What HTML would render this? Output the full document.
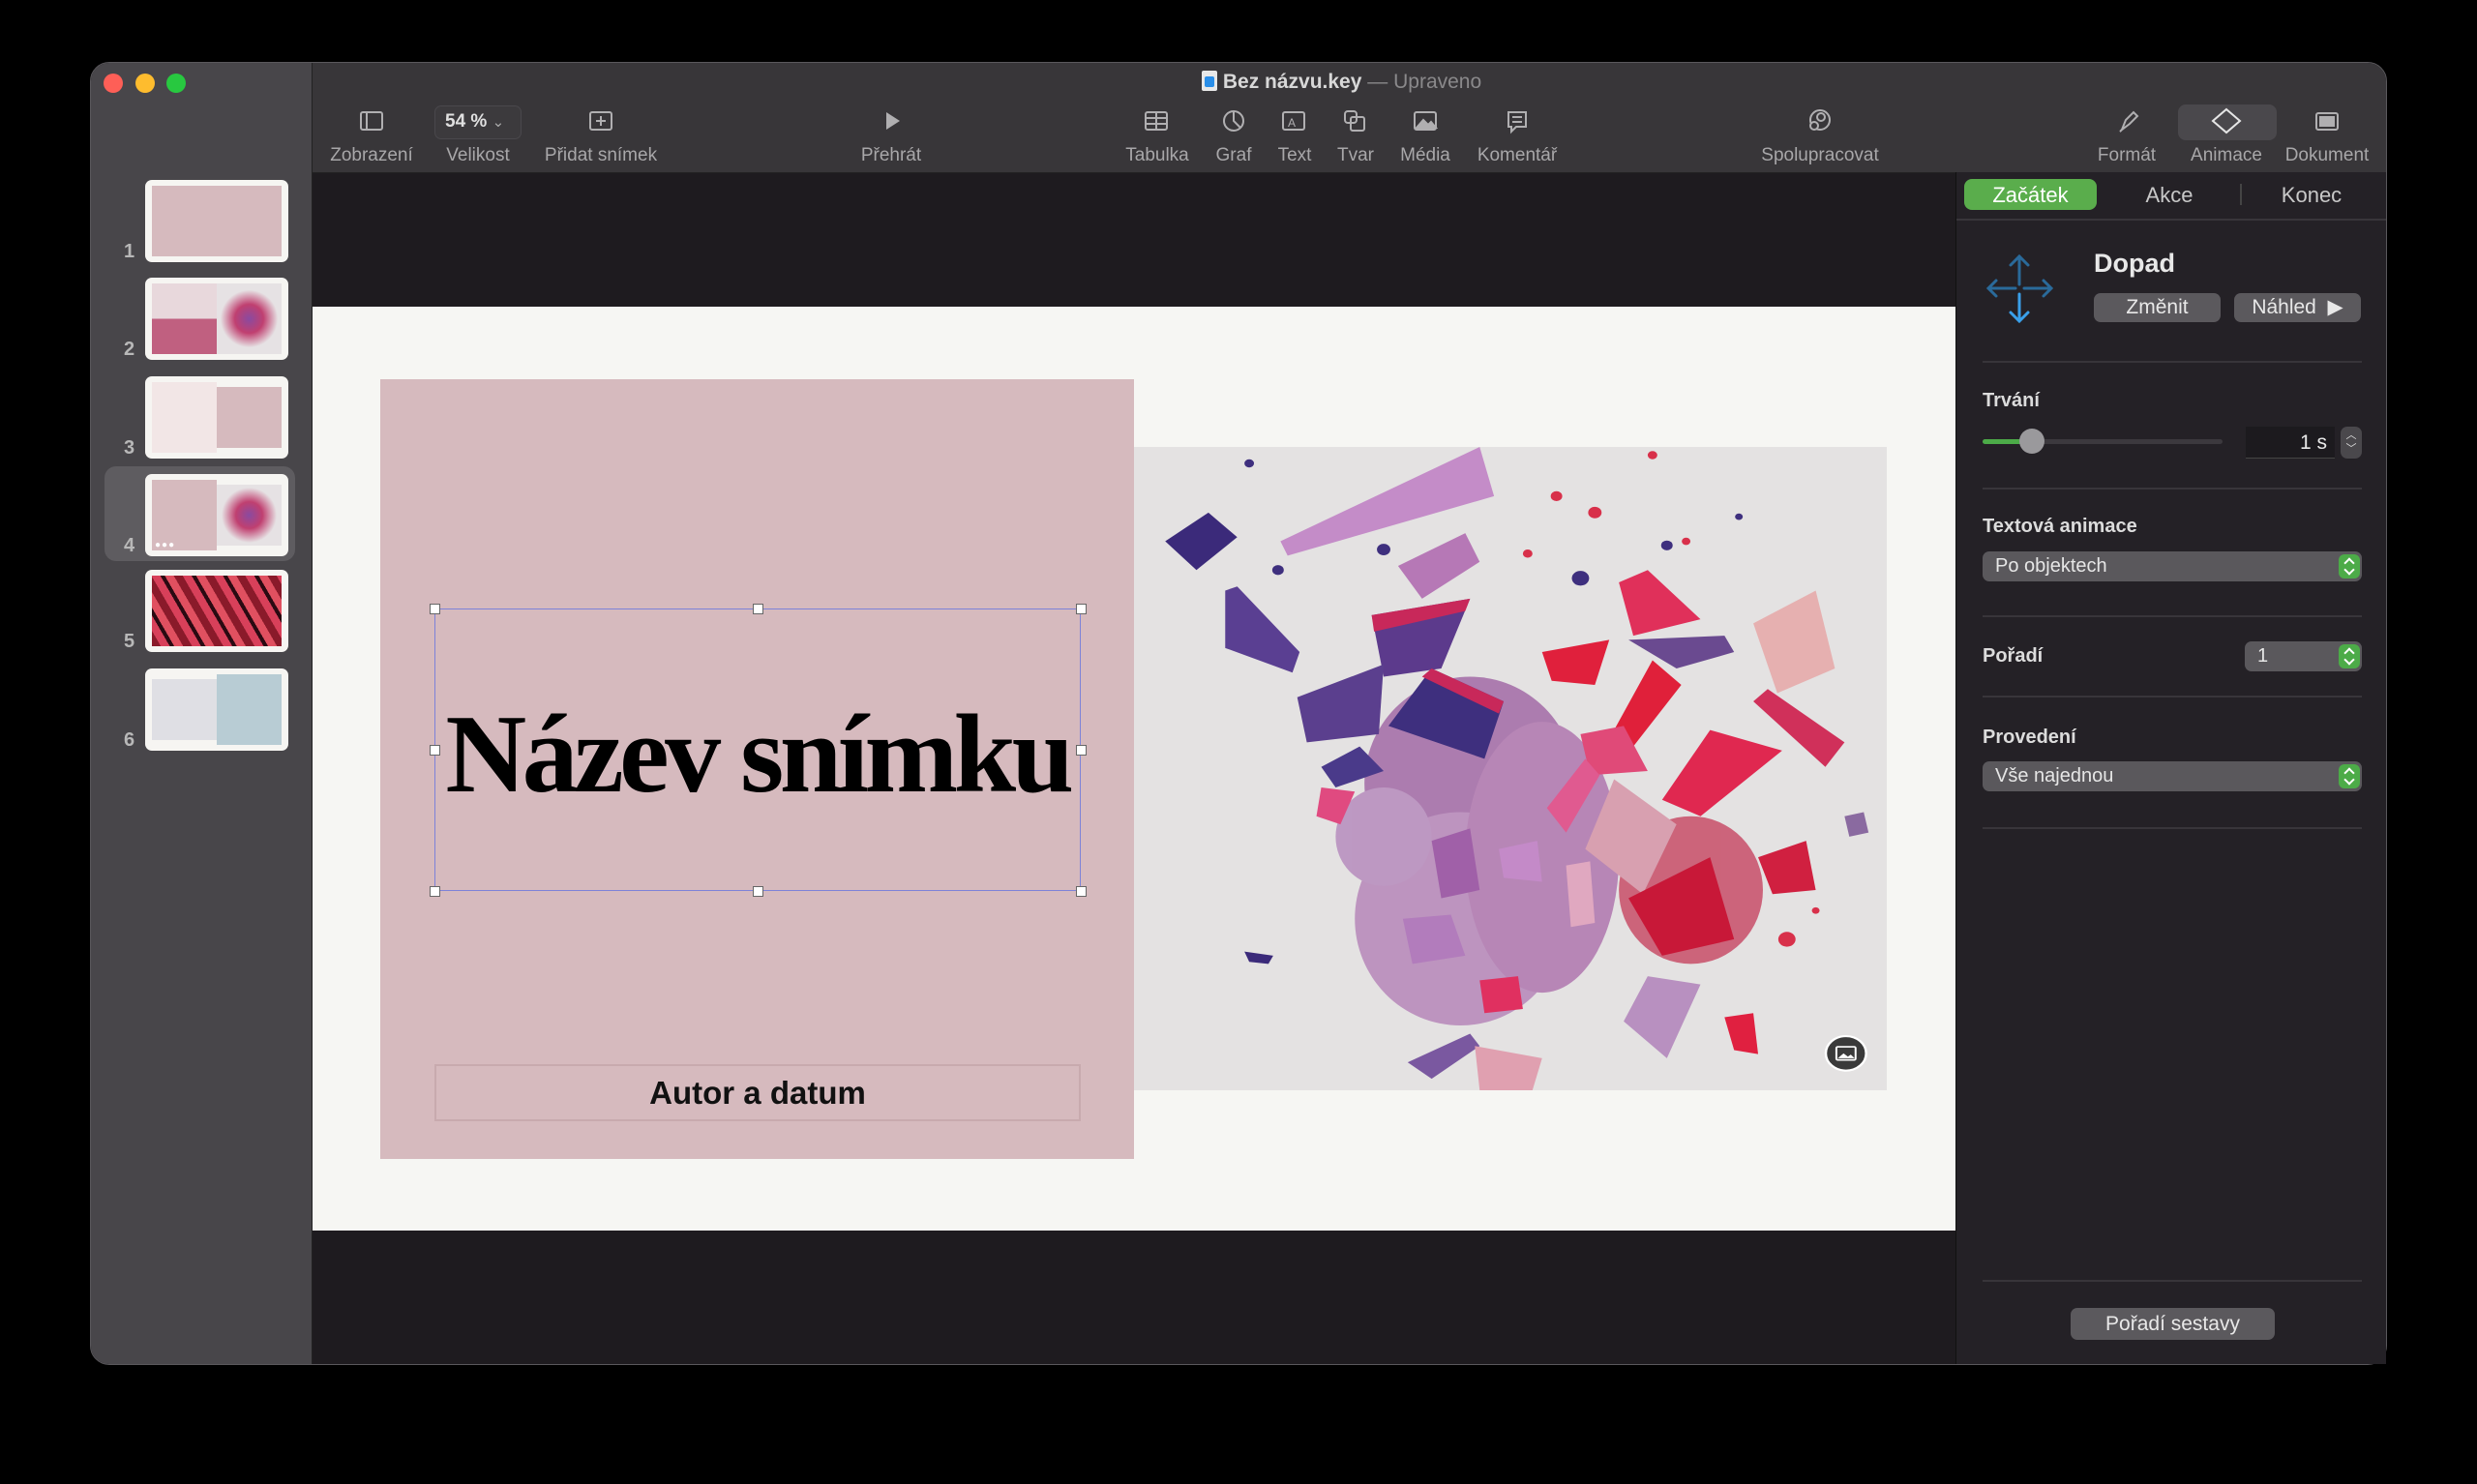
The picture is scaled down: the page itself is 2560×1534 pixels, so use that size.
<!DOCTYPE html>
<html><head><meta charset="utf-8"><style>
*{margin:0;padding:0;box-sizing:border-box}
body{width:2560px;height:1534px;background:#000;position:relative;overflow:hidden;font-family:"Liberation Sans",sans-serif}
.abs{position:absolute}
.win{left:93px;top:64px;width:2374px;height:1347px;border-radius:20px;overflow:hidden;background:#1e1b1f;border:1px solid #5a585c}
.tl{width:20px;height:20px;border-radius:50%;top:11px}
.lbl{color:#a8a7a9;font-size:19px;top:86px;transform:translateX(-50%);white-space:nowrap}
.sep{height:2px;background:#38353a;left:2049px;width:392px}
.plab{color:#dcdcdc;font-size:20px;font-weight:bold;left:2049px}
.pop{background:#5a585c;border-radius:7px;height:31px;color:#e6e6e6;font-size:20px;line-height:31px;padding-left:13px}
.gstep{position:absolute;right:2px;top:3px;width:22px;height:25px;border-radius:6px;background:#4cab48}
.gstep:before{content:"";position:absolute;left:7px;top:5px;width:6px;height:6px;border-left:2px solid #fff;border-top:2px solid #fff;transform:rotate(45deg)}
.gstep:after{content:"";position:absolute;left:7px;top:12px;width:6px;height:6px;border-right:2px solid #fff;border-bottom:2px solid #fff;transform:rotate(45deg)}
.btn{background:#5b595d;border-radius:7px;color:#e8e8e8;font-size:21px;text-align:center;height:30px;line-height:30px}
.th{left:150px;width:148px;height:85px;background:#f6f5f2;border-radius:7px;padding:6px 7px}
.num{left:128px;color:#b8b8b8;font-size:20px;font-weight:bold}
.hd{width:11px;height:11px;background:#fff;border:1px solid #666;position:absolute}
</style></head><body>
<div class="abs win">
<div class="abs" style="left:0;top:0;width:229px;height:1347px;background:#48464a;border-right:1px solid #222"></div>
<div class="abs tl" style="left:13px;background:#fe5f57"></div>
<div class="abs tl" style="left:46px;background:#febc2e"></div>
<div class="abs tl" style="left:78px;background:#28c840"></div>
<div class="abs" style="left:229px;top:0;width:2145px;height:114px;background:#383639;border-bottom:1px solid #222"></div>
<div class="abs" style="left:1148px;top:8px;color:#d8d8d8;font-size:21px;white-space:nowrap"><span style="display:inline-block;width:16px;height:21px;background:#e8e8e8;border-radius:2px;vertical-align:-3px;position:relative"><span style="position:absolute;left:3px;top:6px;width:10px;height:11px;background:#2a8ee8;border-radius:2px"></span></span> <b>Bez názvu.key</b> <span style="color:#8a898b">— Upraveno</span></div>
</div>
<div class="abs" style="left:449px;top:109px;width:90px;height:35px;border-radius:7px;border:1px solid #4a484c;background:#3c3a3d"></div>
<div class="abs" style="left:460px;top:115px;color:#e0e0e0;font-size:19px;font-weight:bold">54 % <span style="font-weight:normal;color:#aaa;font-size:15px">⌄</span></div>
<div class="abs" style="left:2251px;top:108px;width:102px;height:37px;border-radius:8px;background:#4a484c"></div>
<svg class="abs" style="left:0;top:0" width="2560" height="180" fill="none" stroke="#b0afb1" stroke-width="2">
<rect x="373" y="116" width="22" height="18" rx="2"/><line x1="379" y1="116" x2="379" y2="134"/>
<rect x="610" y="116" width="22" height="18" rx="2"/><path d="M621 120v10M616 125h10"/>
<path d="M916 116l14 9-14 9z" fill="#b0afb1" stroke="none"/>
<rect x="1184" y="116" width="22" height="18" rx="2"/><path d="M1184 122h22M1184 128h22M1195 116v18"/>
<circle cx="1275" cy="125" r="10"/><path d="M1275 115v10l7 7"/>
<rect x="1326" y="116" width="22" height="18" rx="2"/><text x="1331" y="131" fill="#b0afb1" stroke="none" font-size="12" font-family="Liberation Sans">A</text>
<rect x="1390" y="115" width="12" height="12" rx="3"/><rect x="1396" y="121" width="14" height="14" rx="2"/>
<rect x="1462" y="116" width="22" height="18" rx="2"/><path d="M1464 132l7-8 5 5 3-3 5 6z" fill="#b0afb1"/>
<path d="M1559 116h18v15h-10l-5 5v-5h-3z"/><path d="M1563 121h10M1563 126h10"/>
<circle cx="1881" cy="124" r="10"/><circle cx="1882" cy="121" r="4"/><circle cx="1875" cy="130" r="4" fill="#383639"/>
<path d="M2193 134l4-10 8-8 4 4-8 8zM2191 136l3-3"/>
<path d="M2301 113l14 12-14 12-14-12z" stroke="#e6e6e6"/>
<rect x="2394" y="117" width="22" height="17" rx="2"/><rect x="2398" y="121" width="14" height="9" fill="#b0afb1"/>
</svg>
<div class="abs lbl" style="left:384px;top:150px">Zobrazení</div>
<div class="abs lbl" style="left:494px;top:150px">Velikost</div>
<div class="abs lbl" style="left:621px;top:150px">Přidat snímek</div>
<div class="abs lbl" style="left:921px;top:150px">Přehrát</div>
<div class="abs lbl" style="left:1196px;top:150px">Tabulka</div>
<div class="abs lbl" style="left:1275px;top:150px">Graf</div>
<div class="abs lbl" style="left:1338px;top:150px">Text</div>
<div class="abs lbl" style="left:1401px;top:150px">Tvar</div>
<div class="abs lbl" style="left:1473px;top:150px">Média</div>
<div class="abs lbl" style="left:1568px;top:150px">Komentář</div>
<div class="abs lbl" style="left:1881px;top:150px">Spolupracovat</div>
<div class="abs lbl" style="left:2198px;top:150px">Formát</div>
<div class="abs lbl" style="left:2301px;top:150px">Animace</div>
<div class="abs lbl" style="left:2405px;top:150px">Dokument</div>

<div class="abs" style="left:108px;top:482px;width:197px;height:98px;border-radius:12px;background:#5e5c60"></div>
<div class="abs th" style="top:186px"><div style="width:100%;height:100%;background:#d6babe"></div></div>
<div class="abs num" style="top:249px">1</div>
<div class="abs th" style="top:287px"><div style="display:flex;height:100%"><div style="width:50%;background:linear-gradient(#e8d8dc 0 50%,#c06080 50%)"></div><div style="width:50%;background:radial-gradient(circle at 50% 50%,#8a4aa0 0,#c04070 30%,#e6e2e4 60%)"></div></div></div>
<div class="abs num" style="top:350px">2</div>
<div class="abs th" style="top:389px"><div style="display:flex;height:100%"><div style="width:50%;background:#f2e6e6"></div><div style="width:50%;background:#d6babe;margin:5px 0"></div></div></div>
<div class="abs num" style="top:452px">3</div>
<div class="abs th" style="top:490px"><div style="display:flex;height:100%"><div style="width:50%;background:#d6babe"></div><div style="width:50%;background:radial-gradient(circle at 50% 50%,#8a4aa0 0,#c04070 30%,#e6e2e4 62%);margin:5px 0"></div></div><div class="abs" style="left:10px;top:68px;color:#fff;font-size:10px;letter-spacing:1px">●●●</div></div>
<div class="abs num" style="top:553px">4</div>
<div class="abs th" style="top:589px"><div style="width:100%;height:100%;background:repeating-linear-gradient(60deg,#8a1a2a 0 8px,#d8405a 8px 16px,#2a0a12 16px 20px,#e05060 20px 28px)"></div></div>
<div class="abs num" style="top:652px">5</div>
<div class="abs th" style="top:691px"><div style="display:flex;height:100%"><div style="width:50%;background:#dfdfe4;margin:5px 0"></div><div style="width:50%;background:#b8ccd4"></div></div></div>
<div class="abs num" style="top:754px">6</div>

<div class="abs" style="left:323px;top:317px;width:1698px;height:955px;background:#f6f6f3"></div>
<div class="abs" style="left:393px;top:392px;width:779px;height:806px;background:#d6babe"></div>
<div class="abs" style="left:449px;top:629px;width:668px;height:292px;border:1px solid #7d82d8"></div>
<div class="hd" style="left:444px;top:624px"></div><div class="hd" style="left:778px;top:624px"></div><div class="hd" style="left:1112px;top:624px"></div>
<div class="hd" style="left:444px;top:770px"></div><div class="hd" style="left:1112px;top:770px"></div>
<div class="hd" style="left:444px;top:916px"></div><div class="hd" style="left:778px;top:916px"></div><div class="hd" style="left:1112px;top:916px"></div>
<div class="abs" style="left:449px;top:710px;width:668px;text-align:center;font-family:'Liberation Serif',serif;font-weight:bold;font-size:116px;letter-spacing:-4.5px;color:#000;line-height:140px;white-space:nowrap">Název snímku</div>
<div class="abs" style="left:449px;top:1100px;width:668px;height:59px;border:2px solid #c8aaae;text-align:center;font-size:33px;font-weight:bold;line-height:56px;color:#111">Autor a datum</div>
<svg class="abs" style="left:1172px;top:462px" width="778" height="665" viewBox="0 0 1568 1568" preserveAspectRatio="none">
<rect width="1568" height="1568" fill="#e4e2e2"/>
<g opacity=".75">
<ellipse cx="700" cy="820" rx="220" ry="260" fill="#9a5a9e"/>
<ellipse cx="680" cy="1150" rx="220" ry="260" fill="#b07ab4"/>
<ellipse cx="850" cy="1000" rx="160" ry="330" fill="#a868a8"/>
<ellipse cx="1160" cy="1080" rx="150" ry="180" fill="#c43a58"/>
<ellipse cx="520" cy="950" rx="100" ry="120" fill="#b080b8"/>
</g>
<polygon points="305,230 720,0 750,120 320,265" fill="#c48cc8"/>
<polygon points="65,230 155,160 215,220 130,300" fill="#3b2a7a"/>
<polygon points="190,350 215,340 345,500 330,550 190,490" fill="#5a3f92"/>
<polygon points="550,290 690,210 720,280 600,370" fill="#b678b6"/>
<polygon points="495,410 700,370 640,540 520,560" fill="#5c3a8c"/>
<polygon points="495,410 700,370 690,400 500,450" fill="#c8285a"/>
<polygon points="340,610 520,530 510,700 360,720" fill="#5b3f8e"/>
<polygon points="530,680 620,540 770,620 730,760" fill="#3e2f7e"/>
<polygon points="600,560 620,540 770,620 760,650" fill="#c8285a"/>
<polygon points="390,780 470,730 520,790 420,830" fill="#4a3a8a"/>
<polygon points="850,500 990,470 960,580 870,570" fill="#e0203c"/>
<polygon points="1010,330 1070,300 1180,420 1040,460" fill="#e0305a"/>
<polygon points="1030,470 1230,460 1250,500 1130,540" fill="#6a4a90"/>
<polygon points="1290,430 1420,350 1460,540 1340,600" fill="#e6b0b0"/>
<polygon points="1000,690 1080,520 1140,580 1040,730" fill="#e0203a"/>
<polygon points="930,700 1020,680 1070,790 950,800" fill="#e04a78"/>
<polygon points="1290,620 1320,590 1480,720 1440,780" fill="#d0305a"/>
<polygon points="1100,860 1200,690 1350,740 1180,900" fill="#e02850"/>
<polygon points="860,880 940,760 970,800 900,940" fill="#e05a90"/>
<polygon points="940,980 1000,810 1130,920 1060,1090" fill="#d8a0b0"/>
<polygon points="1030,1100 1200,1000 1250,1200 1100,1240" fill="#c81838"/>
<polygon points="1300,1000 1400,960 1420,1080 1330,1090" fill="#d02040"/>
<polygon points="1020,1400 1070,1290 1180,1310 1110,1490" fill="#b890c0"/>
<polygon points="570,1500 700,1430 720,1460 620,1540" fill="#7a58a0"/>
<polygon points="710,1460 850,1490 830,1568 720,1568" fill="#e0a0b0"/>
<polygon points="1230,1390 1290,1380 1300,1480 1250,1470" fill="#e02040"/>
<polygon points="720,1300 800,1290 810,1370 730,1380" fill="#e03060"/>
<polygon points="560,1150 660,1140 690,1240 580,1260" fill="#b27cbc"/>
<polygon points="620,960 700,930 720,1080 640,1100" fill="#a060a8"/>
<polygon points="760,980 840,960 850,1060 770,1050" fill="#c48ac8"/>
<polygon points="900,1020 950,1010 960,1160 910,1170" fill="#e0a8c0"/>
<polygon points="390,830 460,840 430,920 380,900" fill="#e04a80"/>
<polygon points="230,1230 290,1240 280,1260 240,1255" fill="#3b2a7a"/>
<polygon points="1480,900 1520,890 1530,940 1490,950" fill="#8a6aa0"/>
<g fill="#d8304a"><circle cx="880" cy="120" r="12"/><circle cx="960" cy="160" r="14"/><circle cx="1080" cy="20" r="10"/><circle cx="1150" cy="230" r="9"/><circle cx="820" cy="260" r="10"/><circle cx="1360" cy="1200" r="18"/><circle cx="1420" cy="1130" r="8"/></g>
<g fill="#3e2f7e"><circle cx="240" cy="40" r="10"/><circle cx="520" cy="250" r="14"/><circle cx="300" cy="300" r="12"/><circle cx="1110" cy="240" r="12"/><circle cx="1260" cy="170" r="8"/><circle cx="930" cy="320" r="18"/></g>
<circle cx="1483" cy="1478" r="42" fill="#3a3a3a" stroke="#fff" stroke-width="5"/>
<rect x="1463" y="1462" width="40" height="32" rx="3" fill="none" stroke="#fff" stroke-width="4"/>
<path d="M1466 1490l12-12 9 8 6-5 8 9z" fill="#fff"/>
</svg>

<div class="abs" style="left:2021px;top:178px;width:445px;height:1232px;background:#242126;border-left:1px solid #111"></div>
<div class="abs" style="left:2030px;top:185px;width:137px;height:32px;border-radius:8px;background:#5aad4c"></div>
<div class="abs" style="left:2030px;top:189px;width:137px;text-align:center;color:#fff;font-size:22px">Začátek</div>
<div class="abs" style="left:2192px;top:189px;width:100px;text-align:center;color:#c8c8c8;font-size:22px">Akce</div>
<div class="abs" style="left:2315px;top:190px;width:2px;height:22px;background:#444"></div>
<div class="abs" style="left:2339px;top:189px;width:100px;text-align:center;color:#c8c8c8;font-size:22px">Konec</div>
<div class="abs" style="left:2022px;top:226px;width:444px;height:2px;background:#38353a"></div>
<svg class="abs" style="left:2050px;top:258px" width="78" height="80" fill="none" stroke-width="3" stroke-linecap="round">
<path d="M37 36V7M28 16l9-9 9 9" stroke="#2a6a9a"/>
<path d="M33 40H5M13 32l-8 8 8 8" stroke="#2a6a9a"/>
<path d="M42 40h28M62 32l8 8-8 8" stroke="#2a6a9a"/>
<path d="M37 46v28M28 65l9 9 9-9" stroke="#3aa0ea"/>
</svg>
<div class="abs" style="left:2164px;top:257px;color:#e8e8e8;font-size:27px;font-weight:bold">Dopad</div>
<div class="abs btn" style="left:2164px;top:303px;width:131px">Změnit</div>
<div class="abs btn" style="left:2309px;top:303px;width:131px">Náhled &nbsp;▶</div>
<div class="abs sep" style="top:373px"></div>
<div class="abs plab" style="top:403px">Trvání</div>
<div class="abs" style="left:2049px;top:454px;width:248px;height:5px;border-radius:3px;background:#3c393e"></div>
<div class="abs" style="left:2049px;top:454px;width:50px;height:5px;border-radius:3px;background:#4cab48"></div>
<div class="abs" style="left:2087px;top:443px;width:26px;height:26px;border-radius:50%;background:#9a999c"></div>
<div class="abs" style="left:2321px;top:441px;width:92px;height:33px;background:#1c1a1e;border-bottom:1px solid #444;color:#e8e8e8;font-size:21px;text-align:right;padding-right:8px;line-height:33px">1 s</div>
<div class="abs" style="left:2419px;top:441px;width:22px;height:33px;border-radius:7px;background:#4a484c;color:#ddd;font-size:11px;text-align:center;line-height:14px;padding-top:2px">︿<br>﹀</div>
<div class="abs sep" style="top:504px"></div>
<div class="abs plab" style="top:533px">Textová animace</div>
<div class="abs pop" style="left:2049px;top:570px;width:392px">Po objektech<span class="gstep"></span></div>
<div class="abs sep" style="top:636px"></div>
<div class="abs plab" style="top:667px">Pořadí</div>
<div class="abs pop" style="left:2320px;top:663px;width:121px">1<span class="gstep"></span></div>
<div class="abs sep" style="top:719px"></div>
<div class="abs plab" style="top:751px">Provedení</div>
<div class="abs pop" style="left:2049px;top:787px;width:392px">Vše najednou<span class="gstep"></span></div>
<div class="abs sep" style="top:855px"></div>
<div class="abs sep" style="top:1323px"></div>
<div class="abs btn" style="left:2140px;top:1352px;width:211px;height:33px;line-height:33px">Pořadí sestavy</div>
</body></html>
